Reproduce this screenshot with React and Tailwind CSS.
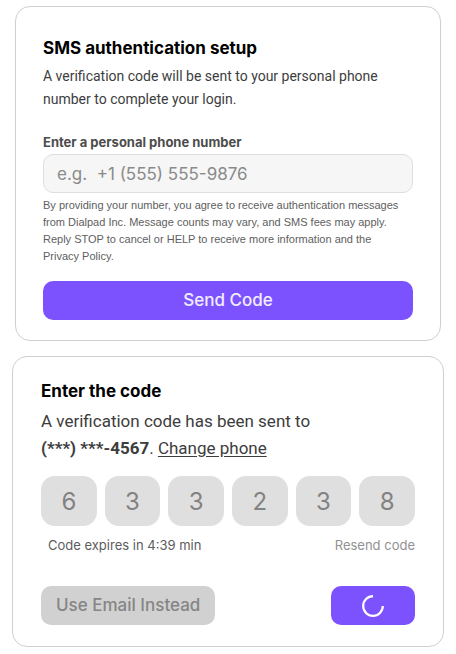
import React, { useState } from "react";

const initialCode = ["6", "3", "3", "2", "3", "8"];

function Card({ className, children }) {
  return (
    <section className={`rounded-[15px] border border-[#cfcfcf] bg-white ${className}`}>{children}</section>
  );
}

function Spinner() {
  return (
    <svg width="22" height="22" viewBox="0 0 22 22" fill="none" aria-hidden="true">
      <path d="M11 1.2A9.8 9.8 0 1 0 20.8 11" stroke="white" strokeWidth="2.2" />
    </svg>
  );
}

function SmsSetup() {
  const [phone, setPhone] = useState("");

  return (
    <Card className="mx-[15px] px-[27px] pt-[29px] pb-5">
      <form onSubmit={(e) => e.preventDefault()}>
        <h2 className="text-[17px] leading-6 font-bold text-black">SMS authentication setup</h2>
        <p className="mt-[5px] font-[Roboto,sans-serif] text-sm leading-[23px] text-[#3d3d3d]">
          A verification code will be sent to your personal phone number to complete your login.
        </p>

        <label htmlFor="phone" className="mt-[21px] block text-[13px] leading-5 font-bold text-[#4c4c4c]">
          Enter a personal phone number
        </label>
        <input
          id="phone"
          type="tel"
          value={phone}
          onChange={(e) => setPhone(e.target.value)}
          placeholder={"e.g.\u00a0 +1 (555) 555-9876"}
          className="mt-0.5 block h-[39px] w-full rounded-[10px] border border-[#dedede] bg-[#f6f6f6] px-[13px] text-[17px] text-[#3d3d3d] placeholder:text-[#8a8a8a]"
        />
        <p className="mt-1 font-['Liberation_Sans',sans-serif] text-[11px] leading-[17px] text-[#606060]">
          By providing your number, you agree to receive authentication messages
          <br />
          from Dialpad Inc. Message counts may vary, and SMS fees may apply.
          <br />
          Reply STOP to cancel or HELP to receive more information and the
          <br />
          Privacy Policy.
        </p>

        <button type="submit" className="mt-4 block h-[39px] w-full rounded-[10px] bg-[#7c52ff] text-[17px] font-medium text-white/90">
          Send Code
        </button>
      </form>
    </Card>
  );
}

function EnterCode() {
  const [code, setCode] = useState(initialCode);

  const setDigit = (index, value) => {
    setCode((prev) => prev.map((digit, i) => (i === index ? value : digit)));
  };

  return (
    <Card className="mx-3 px-7 pt-[22px] pb-[21px]">
      <form onSubmit={(e) => e.preventDefault()}>
        <h2 className="text-[17px] leading-6 font-bold text-black">Enter the code</h2>
        <p className="mt-[5px] font-[Roboto,sans-serif] text-[17px] leading-[27px] text-[#3d3d3d]">
          A verification code has been sent to
          <br />
          <b className="font-bold">(***) ***-4567</b>.{" "}
          <a href="#phone" className="underline underline-offset-2">
            Change phone
          </a>
        </p>

        <div className="mt-[14px] grid grid-cols-6 gap-2">
          {code.map((digit, i) => (
            <input
              key={i}
              type="text"
              inputMode="numeric"
              maxLength={1}
              value={digit}
              aria-label={`Digit ${i + 1}`}
              onChange={(e) => setDigit(i, e.target.value)}
              className="h-[50px] w-full min-w-0 rounded-[14px] bg-[#dfdfdf] text-center text-2xl text-[#828282]"
            />
          ))}
        </div>

        <div className="mt-[9px] flex items-center justify-between pl-[7px] text-[13px] leading-5">
          <span className="text-[#5c5c5c]">Code expires in 4:39 min</span>
          <button type="button" className="text-[#919191]">
            Resend code
          </button>
        </div>

        <div className="mt-[31px] flex justify-between">
          <button type="button" className="h-[39px] rounded-[10px] bg-[#d1d1d1] px-[15px] text-[17px] font-medium text-[#858585]">
            Use Email Instead
          </button>
          <button type="submit" aria-label="Verifying" className="grid h-[39px] w-21 place-items-center rounded-[10px] bg-[#7c52ff]">
            <Spinner />
          </button>
        </div>
      </form>
    </Card>
  );
}

export default function App() {
  return (
    <main className="flex min-h-screen flex-col gap-[15px] bg-white pt-1.5 font-[Inter,sans-serif]">
      <SmsSetup />
      <EnterCode />
    </main>
  );
}
